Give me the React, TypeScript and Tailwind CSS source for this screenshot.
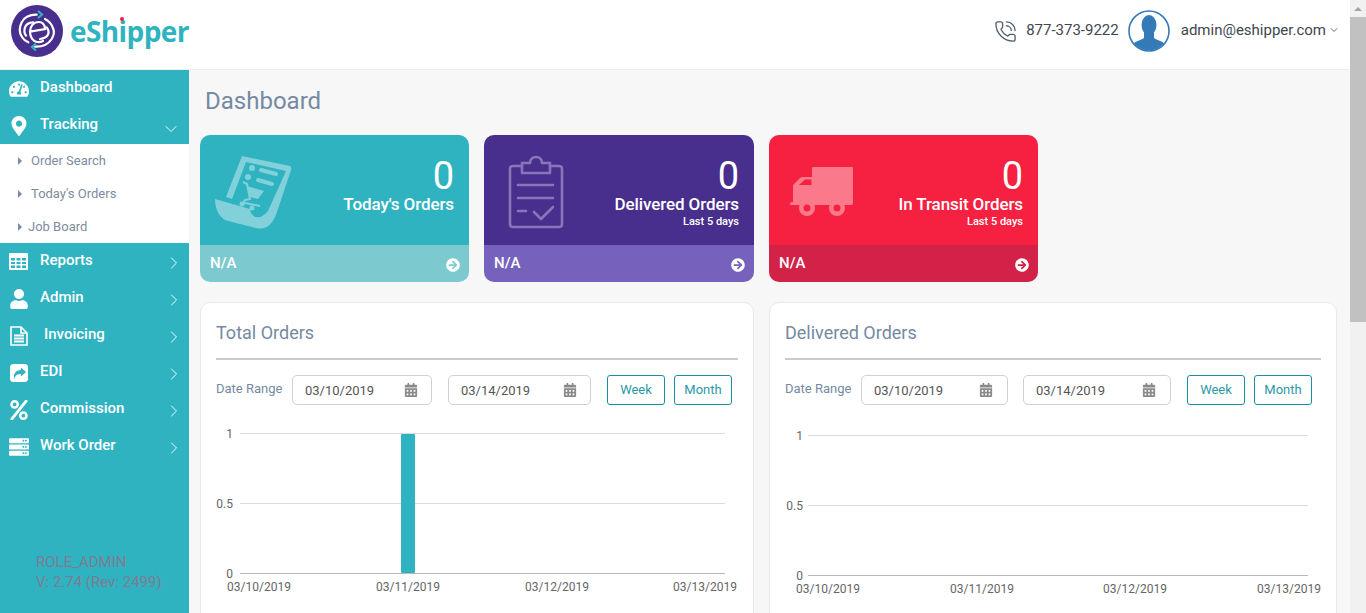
import { ChevronDown, ChevronRight, PhoneCall } from "lucide-react";
import type { ComponentType, ReactNode } from "react";
import {
  FaArrowCircleRight,
  FaCalendarAlt,
  FaMapMarkerAlt,
  FaPercent,
  FaServer,
  FaTachometerAlt,
  FaUser,
} from "react-icons/fa";

function TableIcon() {
  return (
    <svg width="19" height="17" viewBox="0 0 19 17">
      <path
        fill="#fff"
        fillRule="evenodd"
        d="M1 0 H18 Q19 0 19 1 V16 Q19 17 18 17 H1 Q0 17 0 16 V1 Q0 0 1 0 Z M2 5 V7.5 H6 V5 Z M7.5 5 V7.5 H11.5 V5 Z M13 5 V7.5 H17 V5 Z M2 9 V11 H6 V9 Z M7.5 9 V11 H11.5 V9 Z M13 9 V11 H17 V9 Z M2 12.5 V15 H6 V12.5 Z M7.5 12.5 V15 H11.5 V12.5 Z M13 12.5 V15 H17 V12.5 Z"
      />
    </svg>
  );
}

function FileIcon() {
  return (
    <svg width="18" height="20" viewBox="0 0 18 20" fill="none" stroke="#fff">
      <path d="M1 1 H11 L17 7 V19 H1 Z" strokeWidth="1.6" />
      <path d="M11 1 V7 H17" strokeWidth="1.6" />
      <path d="M4 9.5 H14 M4 12.5 H14 M4 15.5 H14" strokeWidth="1.8" />
    </svg>
  );
}

function ShareIcon() {
  return (
    <svg width="18" height="18" viewBox="0 0 18 18">
      <rect width="18" height="18" rx="3.5" fill="#fff" />
      <path fill="#2fb3c0" d="M11 3.5 L16 8 L11 12.5 V10 C8 10 5.5 10.5 4.5 15 C3 10 5.5 6.2 11 6 Z" />
    </svg>
  );
}

const MENU_BOTTOM: { label: string; icon: ComponentType<{ className?: string }>; indent?: boolean }[] = [
  { label: "Reports", icon: TableIcon },
  { label: "Admin", icon: FaUser },
  { label: "Invoicing", icon: FileIcon, indent: true },
  { label: "EDI", icon: ShareIcon },
  { label: "Commission", icon: FaPercent },
  { label: "Work Order", icon: FaServer },
];

function Logo() {
  return (
    <div className="flex items-center gap-[7px]">
      <svg width="52" height="52" viewBox="0 0 52 52">
        <circle cx="26" cy="26" r="26" fill="#482e8d" />
        <g fill="none" stroke="#fff" strokeWidth="2.2" strokeLinecap="round">
          <path d="M25.7 9.7 C18 9.5 12.5 13 10.7 17.3 C8.5 22 8 28 11 32 C12.5 34.5 15 36.5 17.3 37.3" />
          <path d="M22.3 17.3 C18 17.5 15 19.5 14 22.3 C13 25 13.5 28.5 15 30.7" />
          <path d="M19 26.7 L34 24 C34 19.5 31 17 28 17 C22.5 17 19 21 19 26.7 C19 32 22 36.5 26 37 C28 37.3 30 37 32 36" />
          <path d="M24 41.7 C32 42 37.5 39 40.7 34 C43 30 43.5 27 42.3 24 C41 19.5 38 16 34 14" />
          <path d="M29 34 C33 33.5 36 32 37.3 29 C38 27 37 24 35.7 22.3" />
        </g>
        <path d="M27 6 L31 9.5 L27 13" fill="none" stroke="#2fb3c0" strokeWidth="2.2" />
        <path d="M25 38.5 L21 42 L25 45.5" fill="none" stroke="#2fb3c0" strokeWidth="2.2" />
      </svg>
      <div className="relative text-[28px] font-bold leading-none text-[#2fb3c0] font-['Open_Sans',sans-serif] tracking-[-0.6px]">
        eShipper
        <span className="absolute left-[50px] top-0 h-[4px] w-[4px] rounded-full bg-[#f62040]" />
      </div>
    </div>
  );
}

function Header() {
  return (
    <header className="flex h-[70px] shrink-0 items-center justify-between border-b border-[#eeeeee] bg-white pb-[7px] pl-[11px] pr-[10px]">
      <Logo />
      <div className="flex items-center text-[15px] text-[#3f4650]">
        <PhoneCall className="h-[23px] w-[23px] text-[#55606a]" strokeWidth={1.4} />
        <span className="ml-[9px] pb-[2px]">877-373-9222</span>
        <svg className="ml-[9px]" width="42" height="42" viewBox="0 0 42 42">
          <defs>
            <clipPath id="avatar-clip">
              <circle cx="21" cy="21" r="19.5" />
            </clipPath>
          </defs>
          <circle cx="21" cy="21" r="20" fill="#fff" stroke="#337ab7" strokeWidth="1.6" />
          <g clipPath="url(#avatar-clip)" fill="#337ab7">
            <ellipse cx="21" cy="15" rx="7.5" ry="10" />
            <path d="M16 22 H26 V28 C30 31 36 31 38 36 V42 H4 V36 C6 31 12 31 16 28 Z" />
          </g>
        </svg>
        <span className="ml-[11px] pb-[2px]">admin@eshipper.com</span>
        <ChevronDown className="mb-[2px] ml-[2px] h-[12px] w-[12px]" strokeWidth={1.6} />
      </div>
    </header>
  );
}

function MenuRow({
  icon: Icon,
  label,
  indent,
  open,
  plain,
}: {
  icon: ComponentType<{ className?: string }>;
  label: string;
  indent?: boolean;
  open?: boolean;
  plain?: boolean;
}) {
  return (
    <div className="flex h-[37px] items-center pl-[8px] pr-[5px] text-[15px] font-medium text-white">
      <span className="flex w-[21px] justify-center">
        <Icon className="text-[20px]" />
      </span>
      <span className={indent ? "ml-[15px] pb-[2px]" : "ml-[11px] pb-[2px]"}>{label}</span>
      {!plain && (
        <span className={open ? "ml-auto mr-[3px] pt-[7px]" : "ml-auto pt-[2px]"}>
          {open ? (
            <ChevronDown className="h-[20px] w-[20px]" strokeWidth={1.1} />
          ) : (
            <ChevronRight className="h-[20px] w-[20px]" strokeWidth={1.1} />
          )}
        </span>
      )}
    </div>
  );
}

function SubItem({ label, tight }: { label: string; tight?: boolean }) {
  return (
    <div className="flex h-[33px] items-center pl-[18px] text-[13px] text-[#7d8ca0]">
      <span className="h-0 w-0 border-y-[4px] border-l-[4px] border-y-transparent border-l-[#7d8ca0]" />
      <span className={tight ? "ml-[6px]" : "ml-[9px]"}>{label}</span>
    </div>
  );
}

function Sidebar() {
  return (
    <aside className="flex h-full w-[189px] shrink-0 flex-col bg-[#2fb3c0] pt-0">
      <MenuRow icon={FaTachometerAlt} label="Dashboard" plain />
      <MenuRow icon={FaMapMarkerAlt} label="Tracking" open />
      <div className="bg-white">
        <SubItem label="Order Search" />
        <SubItem label="Today's Orders" />
        <SubItem label="Job Board" tight />
      </div>
      {MENU_BOTTOM.map((item) => (
        <MenuRow key={item.label} icon={item.icon} label={item.label} indent={item.indent} />
      ))}
      <div className="mt-auto pb-[21px] pl-[36px] text-[15px] leading-[20px] text-[#7e7c93]">
        <div className="pt-[1px]">ROLE_ADMIN</div>
        <div>V: 2.74 (Rev: 2499)</div>
      </div>
    </aside>
  );
}

function ReceiptIcon() {
  return (
    <svg width="78" height="78" viewBox="0 0 78 78" fill="#82d0d9">
      <path d="M28 1 L76 11 Q78 12 77 15 L63 57 C58 72 50 75 42 73 L14 66 C6 64 1 55 1 44 L36 54 C37 63 46 66 54 56 L72 16 L32 7 L18 44 L12 42 Z" />
      <circle cx="38" cy="13" r="3" />
      <circle cx="34" cy="22" r="3" />
      <path d="M47 15 L62 19 M44 25 L58 29" stroke="#82d0d9" strokeWidth="4" strokeLinecap="round" />
      <path d="M33 31 L50 36 L44 44 L36 42 Z" />
      <path d="M29 27 L33 29 L36 44 L31 45 Q29 47 31 48 L46 51" fill="none" stroke="#82d0d9" strokeWidth="2" />
      <circle cx="28" cy="49" r="2.5" />
      <circle cx="38" cy="53" r="2.5" />
    </svg>
  );
}

function ClipboardIcon() {
  return (
    <svg width="56" height="74" viewBox="0 0 56 74" fill="none" stroke="#8577b8" strokeWidth="2.6" strokeLinecap="round" strokeLinejoin="round">
      <path d="M14 11 H5 Q2 11 2 14 V69 Q2 72 5 72 H51 Q54 72 54 69 V14 Q54 11 51 11 H42" />
      <path d="M14 18 V8 H22 C22 0 34 0 34 8 H42 V18 Z" />
      <path d="M10 30 H45 M10 43 H45 M10 56 H18 M26 57 L33 64 L45 52" />
    </svg>
  );
}

function TruckIcon() {
  return (
    <svg width="64" height="54" viewBox="0 0 64 54" fill="#fa7a8c">
      <path fillRule="evenodd" d="M22 2 Q22 1 23 1 H62 Q63 1 63 2 V37 Q63 39 61 39 H1 Q0 39 0 37.5 Q0 36 3 36 V19 L10 12 Q11 11 13 11 H22 Z M9 19 H21.5 V13.5 H15 Z" />
      <circle cx="17" cy="42" r="8" />
      <circle cx="47" cy="42" r="8" />
      <circle cx="17" cy="42" r="3.5" fill="#f62040" />
      <circle cx="47" cy="42" r="3.5" fill="#f62040" />
    </svg>
  );
}

function StatCard({
  top,
  bottom,
  icon,
  iconClass,
  label,
  sub,
  className,
}: {
  top: string;
  bottom: string;
  icon: ReactNode;
  iconClass: string;
  label: string;
  sub?: string;
  className: string;
}) {
  return (
    <div className={`overflow-hidden rounded-[10px] text-white ${className}`}>
      <div className={`relative flex h-[110px] flex-col items-end pr-[15px] pt-[25px] ${top}`}>
        <div className={`absolute ${iconClass}`}>{icon}</div>
        <div className="text-[38px] font-normal leading-[33px]">0</div>
        <div className="text-[17px] font-medium leading-[22px] tracking-[-0.1px]">{label}</div>
        {sub && <div className="text-[11px] font-medium leading-[14px]">{sub}</div>}
      </div>
      <div className={`flex h-[37px] items-center justify-between pl-[10px] pr-[9px] ${bottom}`}>
        <span className="text-[15px] font-medium">N/A</span>
        <FaArrowCircleRight className="mt-[3px] text-[14px]" />
      </div>
    </div>
  );
}

function DateInput({ value, className, iconRight }: { value: string; className: string; iconRight: string }) {
  return (
    <div className={`flex h-[30px] items-center justify-between rounded-[5px] border border-[#d0d0d0] bg-white pl-[12px] text-[13px] text-[#555] ${className} ${iconRight}`}>
      <span className="pt-[1px]">{value}</span>
      <FaCalendarAlt className="text-[14px] text-[#8a8a8a]" />
    </div>
  );
}

function RangeButton({ label }: { label: string }) {
  return (
    <div className="flex h-[30px] w-[58px] items-center justify-center rounded-[3px] border border-[#17919f] bg-white text-[13px] text-[#2a9aa7]">
      {label}
    </div>
  );
}

function Chart({
  width,
  x0,
  x1,
  ticks,
  bar,
  labelX,
}: {
  width: number;
  x0: number;
  x1: number;
  ticks: number[];
  bar?: number;
  labelX: number;
}) {
  const rows = [
    { y: 12, label: "1" },
    { y: 82, label: "0.5" },
    { y: 152, label: "0" },
  ];
  return (
    <svg width={width} height="190" className="block font-['Roboto',sans-serif]">
      {rows.map((r) => (
        <g key={r.label}>
          <line x1={x0} x2={x1} y1={r.y + 0.5} y2={r.y + 0.5} stroke={r.label === "0" ? "#b8b8b8" : "#dcdcdc"} />
          <text x={labelX} y={r.y + 5} textAnchor="end" fontSize="12" fill="#666">
            {r.label}
          </text>
        </g>
      ))}
      {bar !== undefined && <rect x={bar} y="13" width="14" height="139" rx="1" fill="#2fb3c0" />}
      {ticks.map((t, i) => (
        <text key={t} x={t} y="170" textAnchor="middle" fontSize="12" fill="#666">
          {`03/1${i}/2019`}
        </text>
      ))}
    </svg>
  );
}

function Panel({
  title,
  className,
  children,
}: {
  title: string;
  className: string;
  children: ReactNode;
}) {
  return (
    <section className={`h-[420px] shrink-0 rounded-[10px] border border-[#e8e8ee] bg-white px-[15px] ${className}`}>
      <h2 className="flex h-[55px] items-end pb-[12px] text-[18px] font-normal text-[#758aa2]">{title}</h2>
      <div className="h-[2px] bg-[#cccccc]" />
      {children}
    </section>
  );
}

export default function App() {
  return (
    <div className="flex h-[613px] w-full overflow-hidden bg-[#f7f7f7] font-['Roboto',sans-serif]">
      <div className="flex min-w-0 flex-1 flex-col">
        <Header />
        <div className="flex min-h-0 flex-1">
          <Sidebar />
          <main className="min-w-0 flex-1 overflow-hidden pl-[11px]">
            <h1 className="flex h-[65px] items-center pb-[4px] pl-[5px] text-[24px] font-normal text-[#758aa2]">Dashboard</h1>
            <div className="flex gap-[15px]">
              <StatCard
                className="w-[269px]"
                top="bg-[#2fb3c0]"
                bottom="bg-[#7ccad0]"
                icon={<ReceiptIcon />}
                iconClass="left-[14px] top-[20px]"
                label="Today's Orders"
              />
              <StatCard
                className="w-[270px]"
                top="bg-[#482e8d]"
                bottom="bg-[#7662bd]"
                icon={<ClipboardIcon />}
                iconClass="left-[24px] top-[20px]"
                label="Delivered Orders"
                sub="Last 5 days"
              />
              <StatCard
                className="w-[269px]"
                top="bg-[#f62040]"
                bottom="bg-[#d32248]"
                icon={<TruckIcon />}
                iconClass="left-[21px] top-[31px]"
                label="In Transit Orders"
                sub="Last 5 days"
              />
            </div>
            <div className="mt-[20px] flex gap-[15px]">
              <Panel title="Total Orders" className="w-[554px]">
                <div className="mt-[15px] flex items-center">
                  <span className="w-[76px] pb-[2px] text-[13px] text-[#758aa2]">Date Range</span>
                  <DateInput value="03/10/2019" className="w-[140px]" iconRight="pr-[13px]" />
                  <DateInput value="03/14/2019" className="ml-[16px] w-[143px]" iconRight="pr-[13px]" />
                  <div className="ml-[16px]">
                    <RangeButton label="Week" />
                  </div>
                  <div className="ml-[9px]">
                    <RangeButton label="Month" />
                  </div>
                </div>
                <div className="ml-[-15px] mt-[16px]">
                  <Chart width={552} x0={39} x1={524} labelX={32} bar={200} ticks={[58, 207, 356, 504]} />
                </div>
              </Panel>
              <Panel title="Delivered Orders" className="w-[568px]">
                <div className="mt-[15px] flex items-center">
                  <span className="w-[76px] pb-[2px] text-[13px] text-[#758aa2]">Date Range</span>
                  <DateInput value="03/10/2019" className="w-[147px]" iconRight="pr-[14px]" />
                  <DateInput value="03/14/2019" className="ml-[15px] w-[148px]" iconRight="pr-[14px]" />
                  <div className="ml-[16px]">
                    <RangeButton label="Week" />
                  </div>
                  <div className="ml-[9px]">
                    <RangeButton label="Month" />
                  </div>
                </div>
                <div className="ml-[-15px] mt-[18px]">
                  <Chart width={566} x0={38} x1={538} labelX={33} ticks={[58, 212, 365, 519]} />
                </div>
              </Panel>
            </div>
          </main>
        </div>
      </div>
      {/* page scrollbar */}
      <div className="flex w-[16px] shrink-0 flex-col bg-[#f1f1f1]">
        <div className="flex h-[17px] items-center justify-center">
          <span className="h-0 w-0 border-x-[4px] border-b-[4px] border-x-transparent border-b-[#a3a3a3]" />
        </div>
        <div className="h-[305px] bg-[#c1c1c1]" />
      </div>
    </div>
  );
}
